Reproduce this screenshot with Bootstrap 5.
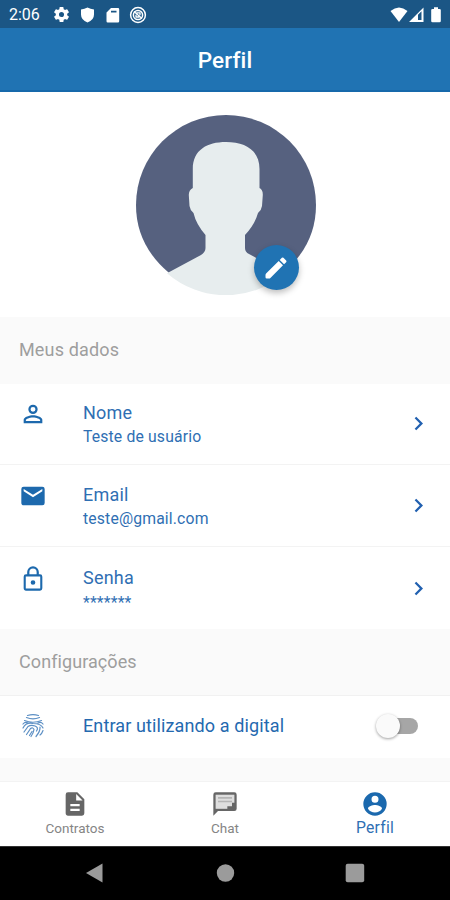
<!DOCTYPE html>
<html lang="pt-BR">
<head>
<meta charset="utf-8">
<meta name="viewport" content="width=device-width, initial-scale=1">
<title>Perfil</title>
<link href="https://cdn.jsdelivr.net/npm/bootstrap@5.3.0/dist/css/bootstrap.min.css" rel="stylesheet">
<style>
  :root { --brand: #2073b3; --ink: #2f6fb3; }
  body { font-family: Roboto, "Liberation Sans", sans-serif; background: #fafafa; color: var(--ink); }
  svg { display: block; flex-shrink: 0; fill: currentColor; }
  .screen { width: 450px; height: 900px; }
  .status { height: 28px; background: #1b5685; padding: 1px 7px 0 9px; font-size: 16px; }
  .clock { width: 43px; padding-top: 1px; }
  .appbar { height: 64px; padding-top: 4px; background: var(--brand); font-size: 22.5px; font-weight: 500; border-bottom: 2px solid #1769ab; letter-spacing: .15px; }
  .hero { height: 225px; padding: 23px 0 0 1px; }
  .avatar { width: 180px; height: 180px; }
  .edit { right: 17px; bottom: 5px; width: 45px; height: 45px; background: var(--brand); box-shadow: 0 3px 6px rgba(0,0,0,.26); }
  .label-row { height: 67px; padding: 0 0 2px 19px; font-size: 18px; color: #9e9e9e; letter-spacing: .16px; }
  .label-row.config { height: 66px; letter-spacing: .08px; }
  .entry { height: 82px; padding: 17px 18px 0 19px; border-bottom: 1px solid #f3f3f3 !important; }
  .entry:first-child { height: 81px; padding-top: 16px; }
  .entry:last-child { height: 82px; padding-top: 18px; border-bottom: 0 !important; }
  .entry-text { margin-left: 36px; padding-top: 1px; }
  .entry-title { font-size: 18px; line-height: 24px; letter-spacing: .2px; }
  .entry-sub { font-size: 15.75px; line-height: 24px; letter-spacing: .15px; }
  .stars { padding-top: 2px; line-height: 21px; }
  .chev { margin-top: 10px; color: #2160b0; }
  .icon { color: #1d69ad; }
  .finger { height: 63px; padding: 0 32px 2px 19px; border-top: 1px solid #f1f1f1; }
  .finger .entry-title { padding-top: 0; letter-spacing: .12px; color: #2469af; }
  .toggle { width: 42px; height: 24px; }
  .track { left: 6px; top: 4px; width: 36px; height: 16px; background: #a6a6a6; }
  .thumb { left: 0; top: 0; width: 24px; height: 24px; background: #fafafa; box-shadow: 0 1px 3px rgba(0,0,0,.38); }
  .gap-row { height: 23px; }
  .tabs { height: 65px; border-top: 1px solid #f3f3f3; color: #666; font-size: 13.5px; padding-top: 8px; }
  .tab-text { line-height: 20px; color: #858585; }
  .tab-on { color: #1b69ae; }
  .tab-on .tab-text { color: var(--ink); font-size: 15.75px; letter-spacing: .2px; }
  .sysbar { height: 54px; background: #000; color: #9b9b9b; border-top: 1px solid #333; padding: 0 84px 2px 83px; }
</style>
</head>
<body>
<div class="screen d-flex flex-column overflow-hidden">
  <div class="status d-flex align-items-center text-white">
    <span class="clock">2:06</span>
    <svg width="19" height="19" viewBox="0 0 24 24"><path d="M19.140 12.940a7 7 0 0 0 0-1.880l2.030-1.580a.5.500 0 0 0 .12-.61l-1.920-3.320a.5.500 0 0 0-.59-.22l-2.390.96a7 7 0 0 0-1.620-.94L14.400 2.810a.5.500 0 0 0-.48-.41h-3.840a.5.500 0 0 0-.47.41L9.250 5.350a7 7 0 0 0-1.620.94l-2.390-.96a.5.500 0 0 0-.59.22L2.740 8.870a.5.500 0 0 0 .12.610l2.030 1.580a7 7 0 0 0 0 1.880l-2.030 1.580a.5.500 0 0 0-.12.610l1.920 3.320c.12.220.37.290.59.220l2.390-.96a7 7 0 0 0 1.620.94l.36 2.540c.05.240.24.410.48.410h3.840c.24 0 .44-.17.470-.41l.36-2.540a7 7 0 0 0 1.620-.94l2.390.96c.22.080.47 0 .59-.22l1.920-3.320a.5.500 0 0 0-.12-.61zM12 15.200a3.200 3.200 0 1 1 0-6.400 3.200 3.200 0 0 1 0 6.400z"/></svg>
    <svg class="ms-2" width="17" height="18" viewBox="0 0 17 18"><path d="M8.500 1.600Q11.500 3.300 15 3.400V8.500Q15 14 8.500 16.500 2 14 2 8.500V3.400Q5.500 3.300 8.500 1.600z"/></svg>
    <svg class="ms-2" width="17" height="18" viewBox="0 0 17 18"><path fill-rule="evenodd" d="M7 2h7q1.200 0 1.200 1.200v12q0 1.200-1.200 1.200H3.700q-1.200 0-1.200-1.200V6.500zM7 4.700v1.900h5.500V4.700z"/></svg>
    <svg class="ms-2" width="18" height="18" viewBox="0 0 18 18"><g fill="none" stroke="#fff"><circle cx="9" cy="9" r="7.400" stroke-width="1.500"/><circle cx="9" cy="9" r="4.600" stroke-width="1.500"/><path d="M5 5.500 13 12.500M7.500 6.800H11v2.500M7 8.700V11h3.500" stroke-width="1.300"/></g></svg>
    <svg class="ms-auto" width="18" height="18" viewBox="0 0 18 18"><path d="M.5 5Q9-2 17.500 5L9 16z"/></svg>
    <svg width="17" height="18" viewBox="0 0 17 18"><path fill-rule="evenodd" d="M1 16 15.500 1.500V16zM10 8.800V14h3.500V5.300z"/></svg>
    <svg class="ms-1" width="14" height="18" viewBox="0 0 14 18"><path d="M5 1.300h4v1.600h1.500q1.300 0 1.300 1.200V15q0 1.200-1.300 1.200h-7q-1.300 0-1.300-1.200V4.100q0-1.200 1.300-1.200H5z"/></svg>
  </div>
  <header class="appbar d-flex align-items-center justify-content-center text-white">Perfil</header>

  <section class="hero bg-white d-flex justify-content-center align-items-start">
    <div class="avatar position-relative">
      <svg width="180" height="180" viewBox="0 0 180 180">
        <path fill="#56617f" d="M0 90a90 90 0 1 1 180 0q0 40-32.800 67.700H32.800Q0 130 0 90z"/>
        <path fill="#e7edee" d="M90 27C109 27 123.500 35 123.500 54V73Q127 75 126.800 80L126 91Q125.500 95 122 98Q119 109 109 120V133Q109 137 113 139L149 158.200A90 90 0 0 1 31 158.200L65 140Q69.500 137 69.500 133V120Q60 109 57.500 98Q54 95 53.500 91L52.800 80Q52.800 75 56.800 73V54C56.800 35 71 27 90 27z"/>
      </svg>
      <button class="edit btn p-0 border-0 rounded-circle position-absolute d-flex align-items-center justify-content-center text-white" aria-label="Editar">
        <svg width="28" height="28" viewBox="0 0 24 24"><path d="M3.500 16.800Q3 17.300 3 18V20Q3 21 4 21H6Q6.700 21 7.200 20.500L18 9.700 14.300 6zM20.700 5.600 18.400 3.300a1 1 0 0 0-1.400 0L15.200 5.100 18.900 8.800 20.700 7a1 1 0 0 0 0-1.400z"/></svg>
      </button>
    </div>
  </section>

  <div class="label-row d-flex align-items-center">Meus dados</div>
  <div class="list-group list-group-flush bg-white">
    <div class="entry d-flex align-items-start">
      <svg class="icon" width="28" height="28" viewBox="0 0 24 24"><path d="M12 5.900a2.100 2.100 0 1 1 0 4.200 2.100 2.100 0 0 1 0-4.200m0 9c2.970 0 6.100 1.460 6.100 2.100v1.100H5.900V17c0-.64 3.130-2.100 6.100-2.100M12 4a4 4 0 1 0 0 8 4 4 0 0 0 0-8zm0 9c-2.670 0-8 1.340-8 4v3h16v-3c0-2.660-5.330-4-8-4z"/></svg>
      <div class="entry-text flex-grow-1"><div class="entry-title">Nome</div><div class="entry-sub">Teste de usuário</div></div>
      <svg class="chev" width="27" height="27" viewBox="0 0 24 24"><path d="M8.590 16.590 13.170 12 8.590 7.410 10 6l6 6-6 6z"/></svg>
    </div>
    <div class="entry d-flex align-items-start">
      <svg class="icon" width="28" height="28" viewBox="0 0 24 24"><path d="M20 4H4a2 2 0 0 0-2 2v12c0 1.100.9 2 2 2h16a2 2 0 0 0 2-2V6a2 2 0 0 0-2-2zm0 4-8 5-8-5V6l8 5 8-5z"/></svg>
      <div class="entry-text flex-grow-1"><div class="entry-title">Email</div><div class="entry-sub">teste@gmail.com</div></div>
      <svg class="chev" width="27" height="27" viewBox="0 0 24 24"><path d="M8.590 16.590 13.170 12 8.590 7.410 10 6l6 6-6 6z"/></svg>
    </div>
    <div class="entry d-flex align-items-start">
      <svg class="icon" width="28" height="28" viewBox="0 0 24 24"><path fill-rule="evenodd" d="M18 8h-1V6A5 5 0 0 0 7 6v2H6a2 2 0 0 0-2 2v10c0 1.100.9 2 2 2h12a2 2 0 0 0 2-2V10a2 2 0 0 0-2-2zM8.900 6a3.100 3.100 0 0 1 6.200 0v2H8.900zM18.200 20.200H5.800V9.800h12.400zM12 17a2 2 0 1 0 0-4 2 2 0 0 0 0 4z"/></svg>
      <div class="entry-text flex-grow-1"><div class="entry-title">Senha</div><div class="entry-sub stars">*******</div></div>
      <svg class="chev" width="27" height="27" viewBox="0 0 24 24"><path d="M8.590 16.590 13.170 12 8.590 7.410 10 6l6 6-6 6z"/></svg>
    </div>
  </div>

  <div class="label-row config d-flex align-items-center">Configurações</div>
  <div class="finger bg-white d-flex align-items-center">
    <svg class="icon" width="28" height="28" viewBox="0 0 28 28"><g fill="none" stroke="#5c8fc4" stroke-width="1.200" stroke-linecap="round"><path d="M8.500 3.500Q14 1.700 19.500 3.500M7.500 5.500Q14 8.300 20.500 5.500M5.500 8.500Q14 12 22.500 8.500M4 12Q6 9.500 9 11M4 16Q7 10 14 11.500Q22 11.500 24 16M5 20Q8 16 9 14.500Q12 12.500 16 14Q20 15.500 17.500 19M7.500 22.500Q10 19 11.500 16.500Q14 15 15 17.500Q14.500 21 12 24.500M19 11Q22 9.500 24 12M21 15Q21.500 19 17 24.500M24 18.500Q23 21.500 21 23M10.500 23.500 13 19.500"/></g></svg>
    <div class="entry-text entry-title flex-grow-1">Entrar utilizando a digital</div>
    <div class="toggle position-relative" role="switch" aria-checked="false"><span class="track position-absolute rounded-pill"></span><span class="thumb position-absolute rounded-circle"></span></div>
  </div>
  <div class="gap-row"></div>

  <nav class="tabs bg-white row g-0 text-center">
    <div class="col d-flex flex-column align-items-center">
      <svg width="28" height="28" viewBox="0 0 24 24"><path d="M14 2H6a2 2 0 0 0-2 2v16c0 1.100.9 2 2 2h12a2 2 0 0 0 2-2V8zm2 16H8v-2h8zm0-4H8v-2h8zm-3-5V3.500L18.500 9z"/></svg>
      <div class="tab-text">Contratos</div>
    </div>
    <div class="col d-flex flex-column align-items-center">
      <svg width="28" height="28" viewBox="0 0 24 24"><path fill="#dedede" d="M4 4h16v12H4z"/><path fill="#b5b5b5" d="M6 6h12v1.500H6zM6 9.300h12v1.200H6z"/><path fill-rule="evenodd" d="M4 2h16a2 2 0 0 1 2 2v12a2 2 0 0 1-2 2H6l-4 4V4a2 2 0 0 1 2-2zm0 2v12h10v-2h4v-3h2V4z"/></svg>
      <div class="tab-text">Chat</div>
    </div>
    <div class="col tab-on d-flex flex-column align-items-center">
      <svg width="28" height="28" viewBox="0 0 24 24"><path d="M12 2a10 10 0 1 0 0 20 10 10 0 0 0 0-20zm0 3a3 3 0 1 1 0 6 3 3 0 0 1 0-6zm0 14.200a7.200 7.200 0 0 1-6-3.220c.03-1.990 4-3.080 6-3.080s5.970 1.090 6 3.080a7.200 7.200 0 0 1-6 3.220z"/></svg>
      <div class="tab-text">Perfil</div>
    </div>
  </nav>
  <div class="sysbar d-flex align-items-center justify-content-between">
    <svg width="22" height="22" viewBox="0 0 22 22"><path d="M19.500 1.500v19L3 11z"/></svg>
    <svg width="20" height="20" viewBox="0 0 20 20"><circle cx="10.500" cy="10" r="8.700"/></svg>
    <svg width="22" height="22" viewBox="0 0 22 22"><rect x="1.700" y="1.700" width="18.500" height="18.500" rx="2"/></svg>
  </div>
</div>
<script src="https://cdn.jsdelivr.net/npm/bootstrap@5.3.0/dist/js/bootstrap.bundle.min.js"></script>
</body>
</html>
